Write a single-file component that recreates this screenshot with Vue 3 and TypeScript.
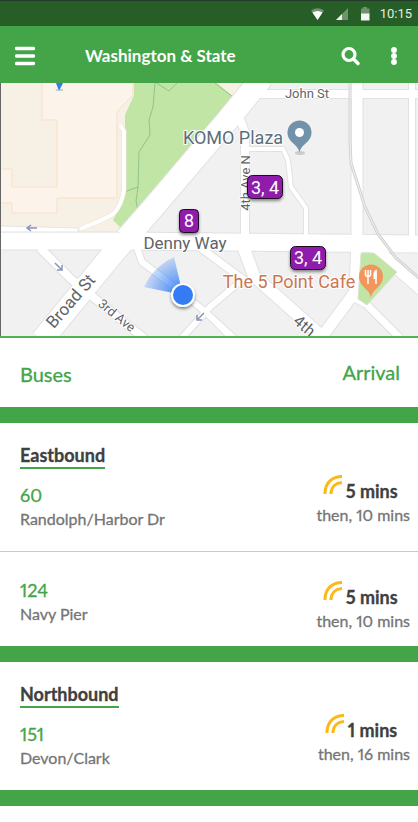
<script setup lang="ts">
interface Route {
  id: string
  name: string
  next: number
  then: number
}

interface Direction {
  title: string
  routes: Route[]
}

const directions: Direction[] = [
  {
    title: 'Eastbound',
    routes: [
      { id: '60', name: 'Randolph/Harbor Dr', next: 5, then: 10 },
      { id: '124', name: 'Navy Pier', next: 5, then: 10 },
    ],
  },
  {
    title: 'Northbound',
    routes: [{ id: '151', name: 'Devon/Clark', next: 1, then: 16 }],
  },
]

// Streets from the narrowest to the widest: path and width of the carriageway.
const streets: { d: string; w: number }[] = [
  { d: 'M248 149H283L288 160L291 187L306 208V238', w: 4 },
  { d: 'M137 248L142 262L167 281L202 309L236 340', w: 6 },
  { d: 'M180 340L210 307L242 280', w: 6 },
  { d: 'M198 246L252 286', w: 7 },
  { d: 'M206 313L230 338', w: 4 },
  { d: 'M412 80V240', w: 6 },
  { d: 'M238 114L245 132V240', w: 8 },
  { d: 'M40 248L71 279L146 340', w: 8 },
  { d: 'M354 298L366 304L400 338', w: 7 },
  { d: 'M372 246L422 290', w: 12 },
  { d: 'M255 94H420', w: 8 },
  { d: 'M357 80V240L355 292L318 342', w: 11 },
  { d: 'M243 246L254 276L326 340', w: 12 },
  { d: 'M0 241H118L420 244', w: 17 },
  { d: 'M42 340L116 250L152 209L226 122L262 78', w: 22 },
]
</script>

<template>
  <div class="screen">
    <header>
      <div class="status">
        <svg class="status-icon" viewBox="0 0 14 14" aria-hidden="true">
          <path d="M0 3.500Q6.500-1 13 3.500L6.500 13Z" fill="#6f936f" />
          <path d="M1.500 5.500Q6.500 2.500 11.500 5.500L6.500 13Z" fill="#fff" />
        </svg>
        <svg class="status-icon" viewBox="0 0 14 14" aria-hidden="true">
          <path d="M14 1V13H2Z" fill="#6f936f" />
          <path d="M8 7V13H2Z" fill="#eef5ee" />
        </svg>
        <svg class="status-icon" viewBox="0 0 14 14" aria-hidden="true">
          <path d="M6 0H10V1.500H12.500V7H4V1.500H6Z" fill="#6f936f" />
          <path d="M4 6.500H12.500V13.500H4Z" fill="#f4f8f4" />
        </svg>
        <time>10:15</time>
      </div>
      <div class="appbar">
        <button type="button" aria-label="Menu">
          <svg width="20" height="20" viewBox="0 0 20 20">
            <path d="M1.500 2.500H18.500M1.500 10H18.500M1.500 17.500H18.500" stroke="#fff" stroke-width="3.400" stroke-linecap="round" />
          </svg>
        </button>
        <h1>Washington &amp; State</h1>
        <button type="button" aria-label="Search">
          <svg width="20" height="20" viewBox="0 0 20 20" fill="none" stroke="#fff">
            <circle cx="8" cy="8.500" r="6" stroke-width="3.200" />
            <path d="M13 13.500L17 17.500" stroke-width="3.500" stroke-linecap="round" />
          </svg>
        </button>
        <button type="button" class="more" aria-label="More options">
          <svg width="8" height="20" viewBox="0 0 8 20" fill="#fff">
            <circle cx="4" cy="4" r="2.900" />
            <circle cx="4" cy="10" r="2.900" />
            <circle cx="4" cy="16" r="2.900" />
          </svg>
        </button>
      </div>
    </header>

    <svg class="map" viewBox="0 83 418 253" preserveAspectRatio="xMidYMid slice" role="img" aria-label="Map">
      <defs>
        <radialGradient id="beam" gradientUnits="userSpaceOnUse" cx="183" cy="295" r="40">
          <stop offset="0.200" stop-color="#2f7cf6" stop-opacity="0.850" />
          <stop offset="1" stop-color="#2f7cf6" stop-opacity="0.200" />
        </radialGradient>
        <filter id="shadow" x="-30%" y="-30%" width="160%" height="180%">
          <feDropShadow dx="0" dy="2" stdDeviation="1.500" flood-opacity="0.450" />
        </filter>
      </defs>

      <rect y="80" width="418" height="260" fill="#f1f1f1" />
      <path d="M0 83H243L235 98L210 126L123 232H0Z" fill="#f7f1e5" />
      <path
        d="M42 82H133V95L117 112V198H57V213H12V203H0V169H12V187H57V120H42Z"
        fill="#fcf3ea"
        stroke="#fbdfc6"
      />
      <path d="M134 82H215L234 97L210 127L123 230L113 220L122 203L125 190V115L134 95Z" fill="#c0e5a4" />
      <path
        d="M155 82L153 107L149 120L150 135L139 152L138 187L136 201L138 211M124 192L138 187M155 82L169 91L178 82M215 83L234 98"
        fill="none"
        stroke="#93c38e"
      />
      <path d="M0 226L78 228V235H0Z" fill="#fff" stroke="#e5e5e5" />
      <g fill="none" stroke-linejoin="round">
        <path d="M120 125L124 131V190Q122 203 115 212Q111 217 80 229" stroke="#e6e3dc" stroke-width="5" />
        <path d="M120 125L124 131V190Q122 203 115 212Q111 217 80 229" stroke="#fff" stroke-width="4" />
        <path v-for="s in streets" :key="'c' + s.d" :d="s.d" stroke="#e1e1e1" :stroke-width="s.w + 2" />
        <path v-for="s in streets" :key="s.d" :d="s.d" stroke="#fff" :stroke-width="s.w" />
        <path d="M0 232.500H120" stroke="#ececec" />
        <path d="M350 83V140L351 163L365 207L378 234L396 258L420 279" stroke="#d2d2d5" stroke-width="3" />
        <path d="M350 83V140L351 163L365 207L378 234L396 258L420 279" stroke="#f2f2f2" />
      </g>
      <path d="M361 253H374L397 272L367 305L358 299Z" fill="#c0e5a4" stroke="#dce3d6" />

      <g fill="none" stroke="#8a93b8" stroke-width="1.500">
        <path d="M37 228H27M31 225L27 228L31 231" />
        <path d="M55 263L62 270M62 265V270H57" />
        <path d="M204 313L197 320M197 315V320H202" />
      </g>
      <path d="M56 83L59 91L63 83Z" fill="#2f7cf6" />
      <path d="M56 90H63" stroke="#8db6a6" />

      <g class="label" text-anchor="middle">
        <text x="307" y="98" font-size="13">John St</text>
        <text x="185" y="249" font-size="17">Denny Way</text>
        <text font-size="13" transform="translate(250 183) rotate(-90)">4th Ave N</text>
        <text font-size="17" transform="translate(75 305) rotate(-49)">Broad St</text>
        <text font-size="13" transform="translate(114 319) rotate(39)">3rd Ave</text>
        <text font-size="16" transform="translate(301 330) rotate(40)">4th</text>
        <text class="place" x="233" y="144" font-size="18">KOMO Plaza</text>
        <text class="food" x="289" y="288" font-size="18">The 5 Point Cafe</text>
      </g>

      <ellipse cx="300" cy="153" rx="5" ry="2" fill="#ccc" />
      <path d="M299.500 153C298.500 144 287.500 143 287.500 132.500A12 12 0 0 1 311.500 132.500C311.500 143 300.500 144 299.500 153Z" fill="#7292a9" />
      <circle cx="299.500" cy="132.500" r="4.500" fill="#fff" />

      <path d="M371 298C370 289 359 287 359 276.500A12 12 0 0 1 383 276.500C383 287 372 289 371 298Z" fill="#f2965c" />
      <path d="M365.500 270V274.500Q365.500 276.500 368 276.500Q370.500 276.500 370.500 274.500V270M368 270V284M376 270V284" fill="none" stroke="#fff" stroke-width="1.500" />
      <path d="M376.500 269.500V279H373.500V273Q374 270 376.500 269.500Z" fill="#fff" />

      <path d="M183 295L144 287Q153 267 174 257Z" fill="url(#beam)" />
      <circle cx="183" cy="295" r="12" fill="#fff" filter="url(#shadow)" />
      <circle cx="183" cy="295" r="10" fill="#337cf5" />

      <g class="stop" text-anchor="middle" font-size="18">
        <g filter="url(#shadow)">
          <rect x="247.500" y="175.500" width="35" height="23" rx="5" />
          <rect x="179.500" y="209.500" width="19" height="23" rx="4" />
          <rect x="290.500" y="246.500" width="35" height="23" rx="5" />
        </g>
        <text x="265" y="194">3, 4</text>
        <text x="189" y="227">8</text>
        <text x="308" y="264">3, 4</text>
      </g>
      <path d="M0.500 83V336" stroke="#666" />
    </svg>

    <main>
      <div class="columns">
        <span>Buses</span>
        <span class="columns-arrival">Arrival</span>
      </div>
      <section v-for="dir in directions" :key="dir.title">
        <h2>{{ dir.title }}</h2>
        <ul>
          <li v-for="route in dir.routes" :key="route.id">
            <div class="route">
              <strong>{{ route.id }}</strong>
              <span>{{ route.name }}</span>
            </div>
            <div class="arrival">
              <div class="next">
                <svg width="20" height="21" viewBox="0 0 20 21" fill="none" stroke="#fbb915" stroke-width="3" aria-hidden="true">
                  <path d="M2 20V18.500C2.500 9 9 2.500 19 2.500M8 20V18.500C8.500 13 12.500 9 19 8.500" />
                </svg>
                <b>{{ route.next }} mins</b>
              </div>
              <span class="then">then, {{ route.then }} mins</span>
            </div>
          </li>
        </ul>
      </section>
    </main>
  </div>
</template>

<style>
body {
  margin: 0;
  background: #fff;
}
</style>

<style scoped>
.screen {
  font-family: Lato, Roboto, sans-serif;
  font-variant-numeric: proportional-nums;
  color: #404040;
}

.status {
  display: flex;
  align-items: center;
  justify-content: flex-end;
  gap: 9px;
  height: 25px;
  padding-right: 6px;
  border-top: 1px solid #243a2a;
  background: #275d26;
}

.status-icon {
  width: 14px;
  height: 14px;
}

.status time {
  font: 13px/16px Roboto, sans-serif;
  color: #e3ece3;
}

.appbar {
  display: flex;
  align-items: center;
  height: 57px;
  padding: 2px 20px 0 15px;
  box-sizing: border-box;
  background: #43a547;
}

.appbar h1 {
  flex: 1;
  margin: 0 0 0 50px;
  font-size: 17px;
  line-height: 24px;
  font-weight: 700;
  color: #fff;
}

button {
  display: flex;
  padding: 0;
  border: 0;
  background: none;
  cursor: pointer;
}

.more {
  margin-left: 29px;
}

.map {
  display: block;
  width: 100%;
  height: 253px;
  border-bottom: 2px solid #4fb354;
}

.label {
  font-family: Roboto, sans-serif;
  fill: #5f6468;
  stroke: #fff;
  stroke-width: 2px;
  paint-order: stroke;
}

.label .place {
  fill: #5b6e7c;
}

.label .food {
  fill: #cb7650;
}

.stop {
  font-family: Roboto, sans-serif;
  fill: #fff;
}

.stop rect {
  fill: #8f1dab;
  stroke: #1c0a22;
}

main {
  -webkit-text-stroke: 0.300px;
}

.columns {
  display: flex;
  justify-content: space-between;
  padding: 24px 18px 21px 20px;
  border-bottom: 16px solid #43a547;
  font-size: 20px;
  line-height: 24px;
  color: #43a547;
}

.columns-arrival {
  margin-top: -2px;
}

section {
  padding-top: 20px;
  border-bottom: 16px solid #43a547;
}

h2 {
  width: fit-content;
  margin: 0 0 0 20px;
  border-bottom: 2px solid #43a547;
  font-size: 18px;
  line-height: 24px;
}

ul {
  margin: 0;
  padding: 0;
  list-style: none;
}

li {
  display: flex;
  justify-content: space-between;
  align-items: flex-start;
  padding: 10px 8px 20px 20px;
}

li + li {
  padding-top: 26px;
  padding-bottom: 13px;
  border-top: 1px solid #c9c9c9;
}

.route {
  display: flex;
  flex-direction: column;
  padding-top: 4px;
  font-size: 16px;
  line-height: 24px;
  color: #757575;
}

.route strong {
  font-size: 18px;
  font-weight: 400;
  color: #43a547;
}

li + li .route {
  padding-top: 0;
}

.arrival {
  display: flex;
  flex-direction: column;
  align-items: center;
  font-size: 16px;
  line-height: 24px;
  color: #757575;
}

li + li .arrival {
  padding-top: 7px;
}

.next {
  display: flex;
  height: 24px;
  gap: 3px;
  padding-right: 6px;
  font-size: 18px;
  color: #404040;
}

.next svg {
  margin-top: -5px;
}
</style>
